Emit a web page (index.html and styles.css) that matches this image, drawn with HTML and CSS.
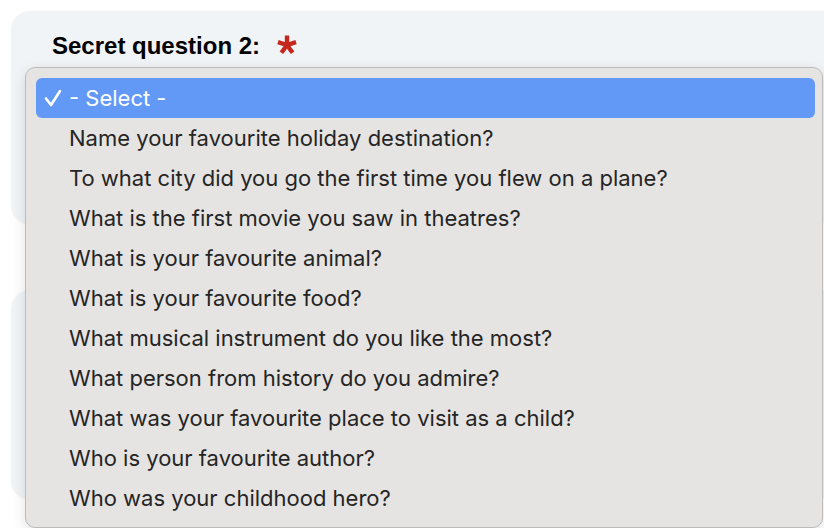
FILE: index.html
```html
<!DOCTYPE html>
<html>
<head>
<meta charset="utf-8">
<link rel="stylesheet" href="styles.css">
</head>
<body>
<div class="page">
  <div class="card card-top">
    <div class="label">
      <span>Secret question 2:</span>
      <svg class="req" width="20" height="20" viewBox="0 0 20 20">
        <g fill="#c4271d" transform="translate(10 10)">
          <rect x="-2.2" y="-9.5" width="4.4" height="9.5"/>
          <rect x="-2.2" y="-9.5" width="4.4" height="9.5" transform="rotate(72)"/>
          <rect x="-2.2" y="-9.5" width="4.4" height="9.5" transform="rotate(144)"/>
          <rect x="-2.2" y="-9.5" width="4.4" height="9.5" transform="rotate(216)"/>
          <rect x="-2.2" y="-9.5" width="4.4" height="9.5" transform="rotate(288)"/>
        </g>
      </svg>
    </div>
  </div>
  <div class="card card-bottom"></div>
</div>
<ul class="menu">
  <li class="item selected"><svg class="check" width="20" height="20" viewBox="0 0 20 20"><polyline points="2,10.5 7,17 16,3" fill="none" stroke="#fff" stroke-width="2.6" stroke-linecap="round" stroke-linejoin="round"/></svg>- Select -</li>
  <li class="item">Name your favourite holiday destination?</li>
  <li class="item">To what city did you go the first time you flew on a plane?</li>
  <li class="item">What is the first movie you saw in theatres?</li>
  <li class="item">What is your favourite animal?</li>
  <li class="item">What is your favourite food?</li>
  <li class="item">What musical instrument do you like the most?</li>
  <li class="item">What person from history do you admire?</li>
  <li class="item">What was your favourite place to visit as a child?</li>
  <li class="item">Who is your favourite author?</li>
  <li class="item">Who was your childhood hero?</li>
</ul>
</body>
</html>
```
FILE: styles.css
```css
html, body {
  margin: 0;
  padding: 0;
  background: #ffffff;
  width: 824px;
  height: 528px;
  overflow: hidden;
}
.page {
  padding: 11px 0 0 12px;
  display: flex;
  flex-direction: column;
  gap: 67px;
}
.card {
  background: #f1f4f6;
  border-radius: 18px 0 0 18px;
  box-shadow: -1px 1px 2px rgba(0,0,0,0.06);
}
.card-top {
  height: 212px;
  padding: 22px 0 0 40px;
  box-sizing: border-box;
}
.card-bottom {
  height: 208px;
}
.label {
  display: flex;
  align-items: center;
  gap: 17px;
  font-family: "Liberation Sans", Arial, sans-serif;
  font-weight: bold;
  font-size: 24px;
  color: #000;
  line-height: 26px;
}
.req { margin-top: -2px; }
.menu {
  position: absolute;
  left: 25px;
  top: 67px;
  width: 798px;
  margin: 0;
  padding: 10px 7px 10px 10px;
  box-sizing: border-box;
  height: 461px;
  list-style: none;
  background: #e6e4e2;
  border: 1px solid #bdbcbb;
  border-radius: 10px;
  box-shadow: 0 4px 14px rgba(0,0,0,0.12);
  font-family: Inter, "Liberation Sans", sans-serif;
  font-size: 22px;
  color: #252525;
}
.item {
  height: 40px;
  line-height: 40px;
  padding-left: 33px;
  border-radius: 6px;
  position: relative;
  white-space: nowrap;
}
.item.selected {
  background: #6299f6;
  color: #fff;
}
.check {
  position: absolute;
  left: 8px;
  top: 10px;
}
```
